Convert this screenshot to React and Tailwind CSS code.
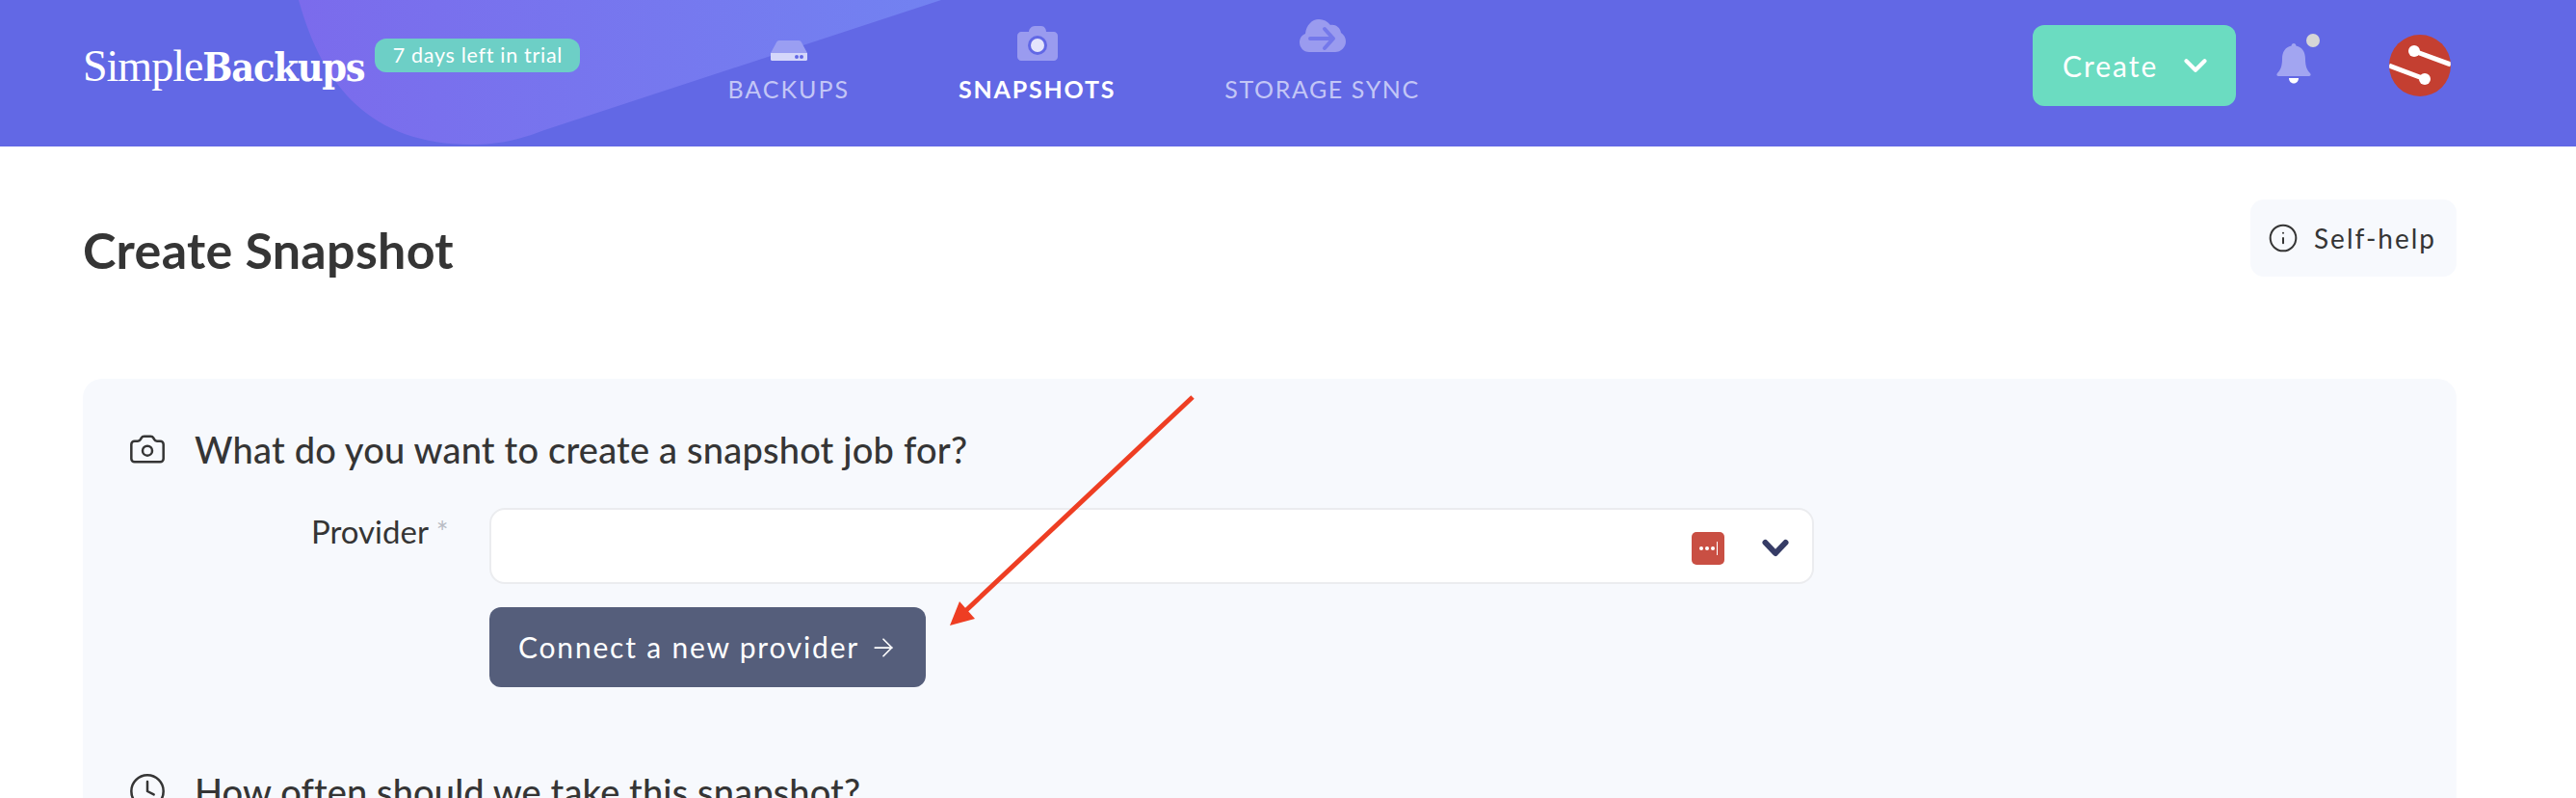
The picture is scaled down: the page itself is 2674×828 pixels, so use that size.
import { ChevronDown, ArrowRight, Info, Camera, Clock } from 'lucide-react';

function DriveIcon() {
  return (
    <svg width="38" height="21" viewBox="0 0 38 21">
      <path d="M9 0h20c1.500 0 2.500 .7 3 2l6 11H0L6 2c.6-1.300 1.500-2 3-2z" fill="#9a9ef2" />
      <path d="M0 13h38v6.500c0 .9-.6 1.500-1.500 1.500h-35C.6 21 0 20.400 0 19.500z" fill="#d5d7fa" />
      <circle cx="27" cy="17" r="2" fill="#6268e5" />
      <circle cx="32" cy="17" r="2" fill="#6268e5" />
    </svg>
  );
}

function SnapIcon() {
  return (
    <svg width="42" height="36" viewBox="0 0 42 36">
      <path d="M4 6h8c0-3 3-6 6-6h7c3 0 5 3 5 6h8c2 0 4 2 4 4v22c0 2-2 4-4 4H4c-2 0-4-2-4-4V10c0-2 2-4 4-4z" fill="#9a9bef" />
      <circle cx="21" cy="20" r="10" fill="#6268e5" />
      <circle cx="21" cy="20" r="7" fill="#e4e5fc" />
    </svg>
  );
}

function CloudIcon() {
  return (
    <svg className="mb-[9px]" width="48" height="34" viewBox="0 0 48 34">
      <path d="M10 34C4 34 0 29 0 24c0-5 3-8 6-9C7 6 13 0 20 0c5 0 9 2 12 6 5-1 10 2 11 8 3 2 5 5 5 9 0 6-5 11-11 11z" fill="#9a9bef" />
      <path d="M11 20h22M26 10l9 10-9 10" fill="none" stroke="#7478ea" strokeWidth="4" strokeLinecap="round" strokeLinejoin="round" />
    </svg>
  );
}

function BellIcon() {
  return (
    <svg width="36" height="42" viewBox="0 0 36 42">
      <path d="M18 0c1.400 0 2.400 1 2.400 2.500C27 4 30 9 30 16c0 8 2 12 5 15 1.200 1.500.6 3-1 3H2c-1.600 0-2.200-1.500-1-3 3-3 5-7 5-15C6 9 9 4 15.600 2.500 15.600 1 16.600 0 18 0z" fill="#a2a5f1" />
      <path d="M13 36h10c0 3-2 5.500-5 5.500S13 39 13 36z" fill="#fff" />
    </svg>
  );
}

function Avatar() {
  return (
    <svg width="64" height="64" viewBox="0 0 64 64">
      <defs>
        <clipPath id="avatar-clip"><circle cx="32" cy="32" r="32" /></clipPath>
      </defs>
      <g clipPath="url(#avatar-clip)">
        <rect width="64" height="64" fill="#c43f31" />
        <path d="M26 17l38 14M37 46L0 32" stroke="#fff" strokeWidth="5" />
        <circle cx="26" cy="17" r="6" fill="#fff" />
        <circle cx="37" cy="46" r="6" fill="#fff" />
      </g>
    </svg>
  );
}

function NavItem({ icon, label, className }) {
  return (
    <div className="flex flex-col items-center">
      <div className="flex h-[63px] items-end">{icon}</div>
      <span className={`mt-[17px] text-[25px] leading-[25px] ${className}`}>{label}</span>
    </div>
  );
}

export default function App() {
  return (
    <div className="relative h-[828px] overflow-hidden bg-white font-['Lato',sans-serif] text-[#353535]">
      {/* header */}
      <header className="relative flex h-[152px] overflow-hidden bg-[#6268e5] pl-[86px] pr-[130px]">
        <svg className="absolute left-0 top-0" width="1000" height="152" viewBox="0 0 1000 152">
          <defs>
            <linearGradient id="blob" x1="0" y1="0" x2="1" y2="0">
              <stop offset="0" stopColor="#7b6bec" />
              <stop offset="1" stopColor="#7282f1" />
            </linearGradient>
          </defs>
          <path d="M310 0C335 90 385 150 490 150c30 0 52-6 75-15L977 0z" fill="url(#blob)" />
        </svg>

        <div className="relative mt-[44px] h-[48px] whitespace-nowrap text-[46px] leading-[46px] text-white">
          <span className="font-['Liberation_Serif',serif] tracking-[-1px]">Simple</span>
          <span className="font-['DejaVu_Serif_Condensed','DejaVu_Serif',serif] text-[41px] font-bold tracking-[-1.200px]">Backups</span>
        </div>

        <div className="relative ml-[11px] mt-[40px] flex h-[35px] w-[213px] items-center justify-center rounded-[12px] bg-[#6dcfc6] text-[21.500px] tracking-[0.700px] text-white">
          7 days left in trial
        </div>

        <nav className="relative ml-[153px] flex gap-[113px]">
          <NavItem icon={<DriveIcon />} label="BACKUPS" className="tracking-[2px] text-[#c3c6f6]" />
          <NavItem icon={<SnapIcon />} label="SNAPSHOTS" className="font-bold tracking-[1.800px] text-white" />
          <NavItem icon={<CloudIcon />} label="STORAGE SYNC" className="tracking-[1.600px] text-[#c3c6f6]" />
        </nav>

        <div className="relative ml-auto flex">
          <button className="mt-[26px] flex h-[84px] w-[211px] items-center gap-[20px] rounded-[12px] bg-[#6bdcc1] pl-[31px] text-[30px] tracking-[2px] text-white">
            Create
            <ChevronDown size={38} strokeWidth={2.600} />
          </button>
          <div className="relative ml-[42px] mt-[45px] h-[42px] w-[36px]">
            <BellIcon />
            <span className="absolute left-[31px] top-[-10px] h-[14px] w-[14px] rounded-full bg-[#d6d6d6]" />
          </div>
          <div className="ml-[81px] mt-[36px]">
            <Avatar />
          </div>
        </div>
      </header>

      {/* page */}
      <main className="pl-[86px] pr-[124px]">
        <div className="flex items-start justify-between pt-[55px]">
          <h1 className="mt-[23px] text-[52px] font-bold leading-[58px] tracking-[0.300px]">Create Snapshot</h1>
          <button className="flex h-[80px] w-[214px] items-center rounded-[14px] bg-[#f7f9fd] pl-[18px] text-[28px] tracking-[2px]">
            <Info size={32} strokeWidth={1.500} />
            <span className="ml-[16px]">Self-help</span>
          </button>
        </div>

        <section className="mt-[105px] h-[600px] rounded-[20px] bg-[#f7f9fd] pl-[47px] pt-[53px]">
          <div className="flex items-center">
            <Camera size={40} strokeWidth={1.500} />
            <h2 className="ml-[29px] text-[38px] font-medium leading-[36px] tracking-[0.200px]">What do you want to create a snapshot job for?</h2>
          </div>

          <div className="mt-[41px] flex">
            <label className="mt-[6px] w-[375px] pl-[190px] text-[33px] leading-[36px]">
              Provider <span className="align-top text-[30px] text-[#b9bcc4]">*</span>
            </label>
            <div>
              <div className="flex h-[79px] w-[1375px] items-center justify-end rounded-[16px] border-2 border-[#ebecef] bg-white pr-[24px] pt-[5px]">
                <div className="flex h-[34px] w-[34px] items-center justify-center gap-[2px] rounded-[5px] bg-[#c94f43]">
                  <span className="h-[4px] w-[4px] rounded-full bg-white" />
                  <span className="h-[4px] w-[4px] rounded-full bg-white" />
                  <span className="h-[4px] w-[4px] rounded-full bg-white" />
                  <span className="h-[14px] w-[1px] bg-white" />
                </div>
                <svg className="ml-[39px]" width="28" height="20" viewBox="0 0 28 20">
                  <path d="M3.500 4L14 15 24.500 4" fill="none" stroke="#363c66" strokeWidth="6" strokeLinecap="round" strokeLinejoin="round" />
                </svg>
              </div>
              <button className="mt-[24px] flex h-[83px] w-[453px] items-center rounded-[12px] bg-[#555e7b] pl-[30px] text-[30px] tracking-[1.800px] text-white">
                Connect a new provider
                <ArrowRight className="ml-[10px]" size={30} strokeWidth={1.400} />
              </button>
            </div>
          </div>

          <div className="mt-[88px] flex items-center">
            <Clock size={40} strokeWidth={1.500} />
            <h2 className="ml-[29px] text-[38px] font-medium leading-[36px] tracking-[0.120px]">How often should we take this snapshot?</h2>
          </div>
        </section>
      </main>

      {/* annotation arrow */}
      <svg className="pointer-events-none absolute left-0 top-0" width="2674" height="828" viewBox="0 0 2674 828">
        <path d="M1238 412L1000 636" stroke="#ee3e23" strokeWidth="5" fill="none" />
        <path d="M986 649l10-25 16 18z" fill="#ee3e23" />
      </svg>
    </div>
  );
}
